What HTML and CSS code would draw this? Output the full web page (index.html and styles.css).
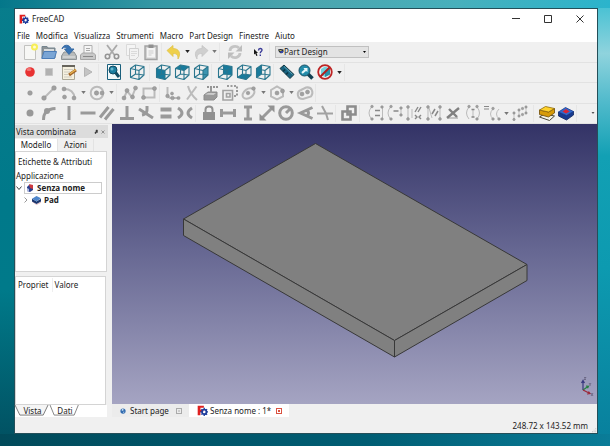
FILE: index.html
```html
<!DOCTYPE html>
<html lang="it">
<head>
<meta charset="utf-8">
<title>FreeCAD</title>
<link rel="stylesheet" href="styles.css">
</head>
<body>
<svg class="defs" aria-hidden="true">
  <symbol id="logo" viewBox="0 0 16 16"><path fill="#e02020" d="M1 1h9v3H5v3h4v3H5v5H1z"/><circle cx="10.500" cy="10" r="3.200" fill="none" stroke="#1d3d9c" stroke-width="2.600"/><path stroke="#1d3d9c" stroke-width="2" d="M10.500 4v2.500M10.500 13.500V16M4.800 10h2M14 10h2M6.500 6l1.600 1.600M13 12.500l1.600 1.600M14.600 6L13 7.600M6.500 14l1.600-1.600"/></symbol>
  <symbol id="drop" viewBox="0 0 6 4"><path d="M0 0h6L3 4z"/></symbol>
  <symbol id="cube" viewBox="0 0 16 16"><path fill="none" stroke="#2a768e" stroke-width="1.100" stroke-linejoin="round" d="M1.500 4.500l5-3.500 8.500 1.500v8.500L10 15.500l-8.500-2zM1.500 4.500L10 6.500v9M10 6.500l5-4M6.500 1v9l8.500 1M6.500 10l-5 3.500"/></symbol>
</svg>

<main class="window">
  <header class="titlebar">
    <svg class="app-icon"><use href="#logo"/></svg>
    <h1 class="title">FreeCAD</h1>
    <div class="window-buttons">
      <button aria-label="Riduci"><svg viewBox="0 0 8 8"><path d="M0 3.500h8"/></svg></button>
      <button aria-label="Ingrandisci"><svg viewBox="0 0 8 8"><path d="M.5.500h7v7h-7z"/></svg></button>
      <button aria-label="Chiudi"><svg viewBox="0 0 8 8"><path d="M.5.500l7 7M7.500.500l-7 7"/></svg></button>
    </div>
  </header>

  <nav class="menubar">
    <button>File</button><button>Modifica</button><button>Visualizza</button><button>Strumenti</button><button>Macro</button><button>Part Design</button><button>Finestre</button><button>Aiuto</button>
  </nav>

  <div class="toolbars">
    <div class="toolbar">
      <div class="group four">
        <button class="tool" aria-label="Nuovo"><svg viewBox="0 0 16 16"><path fill="#f7f7f5" stroke="#c2c2c0" d="M2.500 1.500h11v14h-11z"/><circle cx="12.500" cy="3" r="3.500" fill="#f7ee58"/><circle cx="12.500" cy="3" r="1.500" fill="#fffbd0"/></svg></button>
        <button class="tool" aria-label="Apri"><svg viewBox="0 0 16 16"><path fill="#8d9396" stroke="#75858f" d="M1 14V2.500h5l1 1.500h7v10z"/><path fill="#d9dcdd" d="M3 5h10v4H3z"/><path fill="#7aa5d5" stroke="#4c7db8" d="M.8 14.500L3 7.500h12.500l-2 7z"/></svg></button>
        <button class="tool" aria-label="Salva"><svg viewBox="0 0 16 16"><path fill="#b8bbbb" stroke="#8e9496" d="M3 8h10l2.500 4v3.500H.5V12z"/><path fill="#e6e6e6" d="M2 12.500h12v1H2z"/><path fill="#3974b4" stroke="#386ba4" d="M1 5c1-5 8-5 9 0h3l-5 5.500L3.500 5H6C5 3 3 2.500 1 5z"/></svg></button>
        <button class="tool" aria-label="Stampa"><svg viewBox="0 0 16 16"><path fill="#f5f5f5" stroke="#b0b0b0" d="M4 9V1.500h8V9"/><path stroke="#aaa" d="M6 4.500h4M6 6.500h4"/><path fill="#c8c8c8" stroke="#a5a5a5" d="M2.500 9h11l2 2v4.500H.5V11z"/><path fill="#888" d="M3 12h10v1H3z"/></svg></button>
      </div>
      <div class="group three">
        <button class="tool" aria-label="Taglia"><svg viewBox="0 0 16 16"><path fill="none" stroke="#aaa" stroke-width="1.800" d="M3 1l7.500 10M13 1L5.500 11"/><g fill="none" stroke="#949494" stroke-width="1.600"><circle cx="3.500" cy="12.500" r="2.200"/><circle cx="12.500" cy="12.500" r="2.200"/></g></svg></button>
        <button class="tool" aria-label="Copia"><svg viewBox="0 0 16 16"><path fill="#f5f5f5" stroke="#dadada" d="M2.500.500h9v11h-9z"/><path fill="#f2f2f2" stroke="#d0d0d0" d="M5.500 4.500h9v8l-3 3h-6z"/><path stroke="#dadada" d="M7 7.500h6M7 9.500h6M7 11.500h4"/></svg></button>
        <button class="tool" aria-label="Incolla"><svg viewBox="0 0 16 16"><path fill="#d2d2d2" stroke="#a2a2a2" stroke-width="1.400" d="M2 2h12v13.500H2z"/><path fill="#f4f4f4" d="M4 4h8v9.500H4z"/><path fill="#909090" d="M5.500.500h5V4h-5z"/><path stroke="#ccc" d="M5.500 7h5M5.500 9h5M5.500 11h3"/></svg></button>
      </div>
      <div class="group undo">
        <button class="tool" aria-label="Annulla"><svg viewBox="0 0 16 16"><path fill="#efd04b" stroke="#dfc34c" stroke-width=".8" d="M1 6.500L7 1.500v3c6 0 8.500 5 5 10.500 0-4-1-5.500-5-5.500v3z"/></svg></button><button class="drop dark" aria-label="Elenco annulla"><svg><use href="#drop"/></svg></button>
        <button class="tool" aria-label="Ripeti"><svg viewBox="0 0 16 16"><path fill="#cfcfcf" stroke="#c4c4c4" stroke-width=".8" d="M15 6.500L9 1.500v3c-6 0-8.500 5-5 10.500 0-4 1-5.500 5-5.500v3z"/></svg></button><button class="drop" aria-label="Elenco ripeti"><svg><use href="#drop"/></svg></button>
      </div>
      <div class="group help">
        <button class="tool" aria-label="Aggiorna"><svg viewBox="0 0 16 16"><path fill="none" stroke="#c4c4c4" stroke-width="2.800" d="M3 7c0-4.500 6-6 9-3M13 9c0 4.500-6 6-9 3"/><path fill="#bdbdbd" d="M15 1v6.500H8.500zM1 15V8.500h6.500z"/></svg></button>
        <button class="tool" aria-label="Che cos'è"><svg viewBox="0 0 16 16"><path fill="#161616" d="M4 5l4 4H6.500l1 2.500-1.200.500-1-2.500L4 10.500z"/><path fill="none" stroke="#3b3c98" stroke-width="1.400" d="M8.500 6.500c0-2.500 3.500-2.500 3.500-.5 0 1.500-1.700 1.500-1.700 3.200M10.300 10.500V12"/></svg></button>
      </div>
      <div class="workbench">
        <svg viewBox="0 0 12 10"><path fill="#252a36" d="M0 1l5-1 6 1v5L6 9 2 6z"/><path fill="#3446a5" d="M4 3l6 1v4H5z"/><path fill="#c3bd50" d="M3 2h4v2H3z"/></svg>
        <select aria-label="Ambiente di lavoro"><option>Part Design</option></select>
        <svg class="select-arrow"><use href="#drop"/></svg>
      </div>
    </div>

    <div class="toolbar">
      <div class="group four">
        <button class="tool" aria-label="Registra macro"><svg viewBox="0 0 16 16"><circle cx="8" cy="8" r="4.800" fill="#e83232"/><ellipse cx="7" cy="5.500" rx="2.500" ry="1.500" fill="#f17878"/></svg></button>
        <button class="tool" aria-label="Ferma macro"><svg viewBox="0 0 16 16"><path fill="#b1b1b1" stroke="#c7c7c7" d="M4.500 4.500h7v7h-7z"/></svg></button>
        <button class="tool" aria-label="Macro"><svg viewBox="0 0 16 16"><path fill="#f5f0df" stroke="#aaa696" d="M1.500 2.500h12v13h-12z"/><path fill="#67645c" d="M1 1h13v2H1z"/><path stroke="#d0ccc0" d="M3 5.500h9M3 8h6M3 10.500h4M3 13h8"/><path stroke="#a0642a" stroke-width="3" d="M15 6l-7 5"/><path stroke="#e9b54f" stroke-width="1.400" d="M15 5.500l-6 4.300"/></svg></button>
        <button class="tool" aria-label="Esegui macro"><svg viewBox="0 0 16 16"><path fill="#c4c4c4" stroke="#b4b4b4" d="M4.500 3.500l7.500 4.500-7.500 4.500z"/></svg></button>
      </div>
      <div class="group two">
        <button class="tool" aria-label="Adatta alla vista"><svg viewBox="0 0 16 16"><path fill="#f0f8fa" stroke="#195f7c" d="M1.500.500h13v15h-13z"/><circle cx="7" cy="6" r="4" fill="#1a7da0" stroke="#104a62"/><path stroke="#104a62" stroke-width="3" d="M9.500 8.500l3.500 4.500"/><circle cx="6" cy="5" r="1.500" fill="#69b9d0"/></svg></button>
        <button class="tool" aria-label="Assonometria"><svg viewBox="0 0 16 16"><use href="#cube"/></svg></button>
      </div>
      <div class="group views">
        <button class="tool" aria-label="Frontale"><svg viewBox="0 0 16 16"><path fill="#177b9d" d="M1.500 4.500L10 6.500v9l-8.500-2z"/><use href="#cube"/></svg></button>
        <button class="tool" aria-label="Alto"><svg viewBox="0 0 16 16"><path fill="#177b9d" d="M1.500 4.500l5-3.500L15 2.500l-5 4z"/><use href="#cube"/></svg></button>
        <button class="tool" aria-label="Destra"><svg viewBox="0 0 16 16"><path fill="#3c94b0" d="M10 6.500l5-4v8.500l-5 4.500z"/><use href="#cube"/></svg></button>
      </div>
      <div class="group views">
        <button class="tool" aria-label="Posteriore"><svg viewBox="0 0 16 16"><path fill="#177b9d" d="M6.500 1L15 2.500v8.500l-8.500-1z"/><use href="#cube"/></svg></button>
        <button class="tool" aria-label="Basso"><svg viewBox="0 0 16 16"><path fill="#177b9d" d="M1.500 13.500l5-3.500 8.500 1-5 4.500z"/><use href="#cube"/></svg></button>
        <button class="tool" aria-label="Sinistra"><svg viewBox="0 0 16 16"><path fill="#177b9d" d="M1.500 4.500l5-3.500v9l-5 3.500z"/><use href="#cube"/></svg></button>
      </div>
      <div class="group measure">
        <button class="tool" aria-label="Misura"><svg viewBox="0 0 16 16"><path fill="#17627f" stroke="#143945" stroke-linejoin="round" d="M1 4.500L5 1l10 9.500-4 4z"/><path stroke="#0c3444" stroke-width="1.500" d="M4 7.500l2-2M7 10.500l2-2"/><path stroke="#5aa7bd" d="M5 2.500l8.500 8"/></svg></button>
        <button class="tool" aria-label="Zoom"><svg viewBox="0 0 16 16"><path stroke="#123f51" stroke-width="3.500" d="M10 10l4.500 4.500"/><circle cx="6.500" cy="6.500" r="5.500" fill="#238caa" stroke="#174f65"/><path fill="#e8f8fb" d="M4 9.500L3.500 8l3-2.500L5.500 4H9.500v4L8 7l-3 2.500z"/></svg></button>
        <button class="tool" aria-label="Stile di visualizzazione"><svg viewBox="0 0 16 16"><path fill="#73d1dd" d="M4 5l4-2.500 5 2v6L8 13l-4-2z"/><path fill="#2a91a7" d="M8 7l5-2.500v6L8 13z"/><circle cx="8" cy="8" r="6.800" fill="none" stroke="#bd2424" stroke-width="1.800"/><path stroke="#b31d1d" stroke-width="2" d="M12.500 3.500l-9 9"/></svg></button><button class="drop dark" aria-label="Elenco stili"><svg><use href="#drop"/></svg></button>
      </div>
    </div>

    <div class="toolbar">
      <div class="group curves">
        <button class="tool" aria-label="Punto"><svg viewBox="0 0 16 16"><circle cx="8" cy="8" r="2.300" class="dot"/></svg></button>
        <button class="tool" aria-label="Linea"><svg viewBox="0 0 16 16"><path class="pale" d="M3 13L13 3"/><circle cx="3" cy="13" r="2.300" class="dot"/><circle cx="13" cy="3" r="2.300" class="dot"/></svg></button>
        <button class="tool" aria-label="Arco"><svg viewBox="0 0 16 16"><path class="pale" d="M3 4c6 0 10 3 10.500 9"/><circle cx="3" cy="4" r="2" class="dot"/><circle cx="3.500" cy="12" r="2" class="dot"/><circle cx="13" cy="13" r="2" class="dot"/></svg></button><button class="drop" aria-label="Elenco archi"><svg><use href="#drop"/></svg></button>
        <button class="tool" aria-label="Cerchio"><svg viewBox="0 0 16 16"><circle class="pale" cx="8" cy="8" r="6.300"/><circle cx="7.500" cy="8" r="2.200" class="dot"/><circle cx="13" cy="8" r="2" class="dot"/></svg></button><button class="drop" aria-label="Elenco cerchi"><svg><use href="#drop"/></svg></button>
      </div>
      <div class="group pair">
        <button class="tool" aria-label="Polilinea"><svg viewBox="0 0 16 16"><path class="pale" d="M2 13l3-7 5 6 3.500-9"/><circle cx="2" cy="13" r="2" class="dot"/><circle cx="5" cy="5.500" r="2" class="dot"/><circle cx="10.500" cy="12" r="2" class="dot"/><circle cx="13.500" cy="3" r="2" class="dot"/></svg></button>
        <button class="tool" aria-label="Rettangolo"><svg viewBox="0 0 16 16"><path class="pale" d="M2.500 3.500h11v9h-11z"/><circle cx="2.500" cy="12.500" r="2" class="dot"/><circle cx="13.500" cy="3.500" r="2" class="dot"/></svg></button>
      </div>
      <div class="group shapes">
        <button class="tool" aria-label="Raccordo"><svg viewBox="0 0 16 16"><path class="pale" d="M2.500 2v7q0 4 4 4H14"/><circle cx="2.500" cy="11" r="1.800" class="dot"/><circle cx="7" cy="8.500" r="1.500" class="dot"/><circle cx="7.500" cy="13" r="1.800" class="dot"/><circle cx="13.500" cy="13" r="1.600" class="dot"/></svg></button>
        <button class="tool" aria-label="Taglia bordo"><svg viewBox="0 0 16 16"><path class="pale" d="M4 1q2 8 9 14M12.500 1.500L3 14.500"/></svg></button>
        <button class="tool" aria-label="Geometria esterna"><svg viewBox="0 0 16 16"><path fill="#999" stroke="#8c8c8c" d="M1 10l4-3h9v5l-3 3H1z"/><path fill="#ccc" d="M2 9.500L5 8h8l-2.500 2z"/><path stroke="#999" stroke-width="2" d="M8 8V3"/><path stroke="#777" stroke-width="1.500" stroke-dasharray="2 1" d="M4 2h11"/></svg></button>
        <button class="tool" aria-label="Geometria di costruzione"><svg viewBox="0 0 16 16"><path fill="none" stroke="#a2a2a2" stroke-width="1.600" d="M1 5.500h9.500V15H1zM4.500 8.500H8V12H4.500z"/><path fill="none" stroke="#808080" stroke-width="1.600" stroke-dasharray="2 1.500" d="M5 1h10v10h-4"/></svg></button>
        <button class="tool" aria-label="Ellisse"><svg viewBox="0 0 16 16"><ellipse class="pale" cx="7.500" cy="8.500" rx="6.500" ry="4.500" transform="rotate(-35 7.500 8.500)"/><circle cx="7" cy="8" r="1.800" class="dot"/><circle cx="12.500" cy="3.500" r="1.800" class="dot"/></svg></button><button class="drop" aria-label="Elenco ellissi"><svg><use href="#drop"/></svg></button>
        <button class="tool" aria-label="Poligono"><svg viewBox="0 0 16 16"><path class="pale" d="M2 5l6-3.500L14 5v6.500L8 14.500l-6-3z"/><circle cx="8" cy="8" r="2" class="dot"/><circle cx="13.500" cy="6" r="2" class="dot"/></svg></button><button class="drop" aria-label="Elenco poligoni"><svg><use href="#drop"/></svg></button>
        <button class="tool" aria-label="Asola"><svg viewBox="0 0 16 16"><path class="pale" d="M4 5l5-2.500c6-1 8 5 5 9l-8 2.500C0 14-1 7 4 5z"/><circle cx="5" cy="9" r="2" class="dot"/><circle cx="10.500" cy="7" r="2" class="dot"/></svg></button>
      </div>
    </div>

    <div class="toolbar">
      <div class="group nine">
        <button class="tool" aria-label="Coincidenza"><svg viewBox="0 0 16 16"><circle cx="8" cy="8" r="3.500" fill="#989898"/></svg></button>
        <button class="tool" aria-label="Punto su oggetto"><svg viewBox="0 0 16 16"><path class="bold" d="M2.500 15c0-7 3-11 12-11.500"/><circle cx="6" cy="6" r="3" fill="#999"/></svg></button>
        <button class="tool" aria-label="Verticale"><svg viewBox="0 0 16 16"><path class="bold" d="M8 1v14"/></svg></button>
        <button class="tool" aria-label="Orizzontale"><svg viewBox="0 0 16 16"><path class="bold" d="M.5 8h15"/></svg></button>
        <button class="tool" aria-label="Parallelo"><svg viewBox="0 0 16 16"><path class="bold" d="M1 12.500L9.500 2M6 14.500L14.500 4"/></svg></button>
        <button class="tool" aria-label="Perpendicolare"><svg viewBox="0 0 16 16"><path class="bold" d="M8 1v12M1 13.500h14"/></svg></button>
        <button class="tool" aria-label="Tangente"><svg viewBox="0 0 16 16"><path class="bold" d="M1 4l14 9M4 10c6-1 5-5 5-9"/></svg></button>
        <button class="tool" aria-label="Uguale"><svg viewBox="0 0 16 16"><path class="bold thick" d="M2.500 4.500h11M2.500 11.500h11"/></svg></button>
        <button class="tool" aria-label="Simmetria"><svg viewBox="0 0 16 16"><path class="bold" d="M1 3q8 5 0 10M15 3q-8 5 0 10"/></svg></button>
      </div>
      <div class="group seven">
        <button class="tool" aria-label="Blocca"><svg viewBox="0 0 16 16"><path fill="#909090" d="M2 7h12v8H2z"/><path fill="none" stroke="#909090" stroke-width="2" d="M4.500 7V4.500c0-4 7-4 7 0V7"/></svg></button>
        <button class="tool" aria-label="Distanza orizzontale"><svg viewBox="0 0 16 16"><path class="bold" d="M1.500 4v8M14.500 4v8M1.500 8h13"/></svg></button>
        <button class="tool" aria-label="Distanza verticale"><svg viewBox="0 0 16 16"><path class="bold" d="M4 2h8M4 14h8M8 2v12"/></svg></button>
        <button class="tool" aria-label="Lunghezza"><svg viewBox="0 0 16 16"><path class="bold" d="M3.500 12.500l9-9"/><path fill="#929292" d="M15.500.500v7l-7-7zM.5 15.500v-7l7 7z"/></svg></button>
        <button class="tool" aria-label="Raggio"><svg viewBox="0 0 16 16"><circle cx="8" cy="8" r="6.300" class="bold"/><path class="bold" d="M8 8l4-4"/></svg></button>
        <button class="tool" aria-label="Angolo"><svg viewBox="0 0 16 16"><path class="bold" d="M14.500 2.500L2.500 8l12 5.500M9 5q3 3 0 6"/></svg></button>
        <button class="tool" aria-label="Rifrazione"><svg viewBox="0 0 16 16"><path fill="none" stroke="#a2a2a2" stroke-width="2" d="M0 8.500h16M5 1l4 7.500L11 15"/></svg></button>
      </div>
      <div class="group one">
        <button class="tool" aria-label="Allineamento interno"><svg viewBox="0 0 16 16"><path fill="none" stroke="#8c8c8c" stroke-width="2.600" d="M6.500 1.500h8v8h-8zM1.500 6.500h8v8h-8z"/></svg></button>
      </div>
      <div class="group select-tools">
        <button class="tool" aria-label="Chiudi forma"><svg viewBox="0 0 16 16"><path class="thin" d="M3.500 2q-5 6 0 12M14.500 2v12"/><path stroke="#888" stroke-width="1.500" d="M7 5.500h5M7 10.500h5"/><circle cx="4" cy="1.500" r="1.300" class="dot"/><circle cx="4" cy="14" r="1.300" class="dot"/><circle cx="14" cy="2" r="1.300" class="dot"/><circle cx="14" cy="14" r="1.300" class="dot"/></svg></button>
        <button class="tool" aria-label="Collega bordi"><svg viewBox="0 0 16 16"><path class="thin" d="M3.500 2q-5 6 0 12M14 3v7"/><path fill="none" stroke="#888" stroke-width="1.500" d="M6.500 6h5"/><circle cx="4" cy="1.500" r="1.300" class="dot"/><circle cx="4" cy="14" r="1.300" class="dot"/><circle cx="14" cy="3" r="1.300" class="dot"/><circle cx="14" cy="10" r="1.300" class="dot"/></svg></button>
        <button class="tool" aria-label="Seleziona vincoli"><svg viewBox="0 0 16 16"><path class="thin" d="M2 2v12M6 4v9"/><path fill="none" stroke="#888" stroke-width="1.400" d="M9 7l3-5M12 7l3-5M9 10l2 2-2 2M15 10l-2 2 2 2"/><circle cx="2" cy="2" r="1.400" class="dot"/><circle cx="2" cy="14" r="1.400" class="dot"/></svg></button>
        <button class="tool" aria-label="Seleziona elementi"><svg viewBox="0 0 16 16"><path class="thin" d="M2 2v12M14 2v12M3 3l3 10"/><path fill="none" stroke="#888" stroke-width="1.500" d="M6 9l3-5M9 11l3-5"/><circle cx="2" cy="2" r="1.400" class="dot"/><circle cx="2" cy="14" r="1.400" class="dot"/><circle cx="14" cy="2" r="1.400" class="dot"/><circle cx="14" cy="14" r="1.400" class="dot"/></svg></button>
        <button class="tool" aria-label="Vincoli ridondanti"><svg viewBox="0 0 16 16"><path stroke="#c4c4c4" stroke-width="2" d="M3 13h10"/><path stroke="#808080" stroke-width="2.400" d="M2 13L14 3M4 4l8 8"/></svg></button>
        <button class="tool" aria-label="Vincoli in conflitto"><svg viewBox="0 0 16 16"><path class="thin" d="M4 2q-5 6 0 12M12 2q5 6 0 12M8 5v7"/><path stroke="#888" stroke-width="1.400" d="M6.500 4.500h3M6.500 12h3"/><circle cx="4" cy="1.500" r="1.300" class="dot"/><circle cx="12" cy="1.500" r="1.300" class="dot"/><circle cx="12" cy="14" r="1.300" class="dot"/></svg></button>
        <button class="tool" aria-label="Clona"><svg viewBox="0 0 16 16"><path stroke="#888" d="M0 1.500h5M0 4h5"/><path class="thin" d="M9 4q-5 5 0 10M15 4q-5 5 0 10"/><circle cx="9" cy="3.500" r="1.300" class="dot"/><circle cx="9" cy="14" r="1.300" class="dot"/><circle cx="15" cy="14" r="1.300" class="dot"/></svg></button><button class="drop" aria-label="Elenco clona"><svg><use href="#drop"/></svg></button>
        <button class="tool" aria-label="Matrice"><svg viewBox="0 0 16 16"><path stroke="#c4c4c4" d="M2 8v6M7 5v6M14 2v6"/><g class="dot"><circle cx="2" cy="8" r="1.200"/><circle cx="2" cy="14.500" r="1.200"/><circle cx="7" cy="5" r="1.200"/><circle cx="7" cy="11" r="1.200"/><circle cx="10.500" cy="3.500" r="1.200"/><circle cx="10.500" cy="9.500" r="1.200"/><circle cx="14" cy="2" r="1.200"/><circle cx="14" cy="8" r="1.200"/></g></svg></button>
      </div>
      <div class="group pair">
        <button class="tool" aria-label="Estrusione"><svg viewBox="0 0 16 16"><path fill="#f3f3ea" stroke="#4a4635" d="M.5 12l5-3 10 2-5 4.500z"/><path fill="#d79b08" stroke="#6b4a08" stroke-width=".8" d="M.5 5v4.500l9 2.500 6-4V3.500L9.500 7z"/><path fill="#ffd22b" stroke="#8d680d" stroke-width=".8" d="M.5 5l6-3.500 9 2L9.500 7z"/></svg></button>
        <button class="tool" aria-label="Tasca"><svg viewBox="0 0 16 16"><path fill="#173a91" stroke="#12265b" stroke-width=".8" d="M.5 7v4l8 4 7-5V6.500l-7 4z"/><path fill="#326acc" stroke="#173a91" stroke-width=".8" d="M.5 7l7-4.500 8 4-7 4z"/><path fill="#d82535" d="M4.500 6.500L8 4l3.500 2.500-3.500 2z"/></svg></button>
      </div>
      <button class="more" aria-label="Altri comandi"><svg><use href="#drop"/></svg></button>
    </div>
  </div>

  <div class="workspace">
    <aside class="dock">
      <header class="dock-title"><h2>Vista combinata</h2><button aria-label="Sgancia"><svg viewBox="0 0 6 6"><path d="M3 1h1.500v2.500H3zM2 3h1v1.500H2z"/></svg></button><button aria-label="Chiudi pannello"><svg viewBox="0 0 6 6"><path d="M1.500 1.500l3 3M4.500 1.500l-3 3"/></svg></button></header>
      <div class="dock-tabs" role="tablist"><button role="tab" aria-selected="true">Modello</button><button role="tab" aria-selected="false">Azioni</button></div>
      <section class="tree">
        <h3>Etichette &amp; Attributi</h3>
        <p>Applicazione</p>
        <ul>
          <li class="document"><svg class="chevron" viewBox="0 0 6 6"><path d="M.5 1.500L3 4.500l2.500-3"/></svg><span class="document-name"><svg viewBox="0 0 8 8"><path fill="#293f8d" d="M1 3l2-2 4 1v4L4 8 1 7z"/><path fill="#ce3a3e" d="M3 0l4 1v4L4 4z"/><path fill="#aab5dd" d="M1 4l2 1v3L1 7z"/></svg>Senza nome</span></li>
          <li class="feature"><svg class="chevron light" viewBox="0 0 6 6"><path d="M1.500.500L4 3 1.500 5.500"/></svg><svg class="pad-icon" viewBox="0 0 12 10"><path fill="#fff" stroke="#d99aa0" stroke-width=".7" d="M1 6l5 3.500L11 7"/><path fill="#1b376e" d="M1 3l5 3 5-3v3L6 9 1 6z"/><path fill="#4f86cb" d="M1 3l5-3 5 2.500L6 6z"/></svg>Pad</li>
        </ul>
      </section>
      <section class="properties">
        <table><thead><tr><th>Propriet</th><th>Valore</th></tr></thead></table>
      </section>
      <div class="sheet-tabs" role="tablist">
        <button role="tab" aria-selected="false"><svg viewBox="0 0 36 12" preserveAspectRatio="none"><path d="M0 0l5 11h24l5-11"/></svg><span>Vista</span></button>
        <button role="tab" aria-selected="true"><svg viewBox="0 0 36 12" preserveAspectRatio="none"><path d="M0 0l5 11h24l5-11"/></svg><span>Dati</span></button>
      </div>
    </aside>

    <section class="document-area">
      <div class="view">
        <svg viewBox="0 0 485 280" role="img" aria-label="Solido Pad">
          <g fill="#808080" stroke="#383838" stroke-width="1" stroke-linejoin="round">
            <path d="M203.500 19.500L415 140.500 282.500 216.500 71.500 95z"/>
            <path d="M71.500 95l211 121.500V233L71.500 111.500z"/>
            <path d="M282.500 216.500L415 140.500v16L282.500 233z"/>
          </g>
          <g fill="none" stroke-width="1.200">
            <path stroke="#38397f" d="M471 266v-9M469.500 259l1.500-2.500 1.500 2.500"/>
            <path stroke="#268143" d="M471 266l5-3.500M474 262l2.500.3-1 2"/>
            <path stroke="#9b2636" d="M471 266l7 3.500M475 270l3-.5-1.500-2"/>
            <path stroke="#5b5774" stroke-width=".7" d="M472 253.500h2l-2 2h2M477 259l1 1.500 1-1.500M478 260.500v1.500M479 269l2 3M481 269l-2 3"/>
          </g>
        </svg>
      </div>
      <div class="document-tabs" role="tablist">
        <div class="document-tab start"><svg class="globe" viewBox="0 0 8 8"><circle cx="4" cy="4" r="3.500" fill="#306bb0"/><path fill="#cfe2f2" d="M3 1l2 1-1 2-2-1zM4 5l2 0-1 2z"/></svg><button role="tab" aria-selected="false">Start page</button><button class="close" aria-label="Chiudi Start page"><i></i></button></div>
        <div class="document-tab active"><svg class="file-icon"><use href="#logo"/></svg><button role="tab" aria-selected="true">Senza nome : 1*</button><button class="close red" aria-label="Chiudi Senza nome"><i></i></button></div>
      </div>
    </section>
  </div>

  <footer class="statusbar"><output>248.72 x 143.52 mm</output><svg viewBox="0 0 6 6"><path d="M4 0h1v1H4zM4 2h1v1H4zM2 2h1v1H2zM4 4h1v1H4zM2 4h1v1H2zM0 4h1v1H0z"/></svg></footer>
</main>
</body>
</html>
```
FILE: styles.css
```css
* { box-sizing: border-box; }

body {
  margin: 0;
  height: 100vh;
  padding: 8px 12px 12px 14px;
  font: 8px/12px "Noto Sans", "Open Sans", sans-serif;
  color: #222;
  background:
    linear-gradient(90deg, #04778a, #3497a4 25%, #4ba5ae 50%, #47b0bc 75%, #2bb4cc) top / 100% 8px no-repeat,
    linear-gradient(90deg, #014a5a, #005468 30%, #005d73 60%, #0a7c98) bottom / 100% 12px no-repeat,
    linear-gradient(#3fbfd2, #8fd3dd 12%, #55bccd 22%, #12a0b4 35%, #0d9ab0 60%, #087f9c) right / 12px 100% no-repeat,
    linear-gradient(#087d8c, #00798a 45%, #007a8a 65%, #014f60) left / 14px 100% no-repeat;
}

h1, h2, h3, p, ul { margin: 0; padding: 0; font: inherit; }
ul { list-style: none; }
button, select { margin: 0; padding: 0; border: 0; background: none; font: inherit; color: inherit; white-space: nowrap; }
svg { display: block; flex: none; overflow: visible; }
.defs { position: absolute; width: 0; height: 0; }

.window {
  height: 100%;
  display: flex;
  flex-direction: column;
  background: #f0f0f0;
  border: 1px solid #244f59;
}

/* Title and menus */
.titlebar {
  flex: none;
  height: 19px;
  display: flex;
  align-items: center;
  padding: 0 1px 0 4px;
  background: #fff;
}
.app-icon { width: 10px; height: 10px; margin-right: 3px; }
.window-buttons { display: flex; margin-left: auto; }
.window-buttons button { width: 32px; height: 18px; display: grid; place-items: center; }
.window-buttons svg { width: 8px; height: 8px; fill: none; stroke: #333; stroke-width: 1; }

.menubar {
  flex: none;
  height: 14px;
  display: flex;
  gap: 6px;
  padding: 1px 0 0 2px;
  background: #fff;
}

/* Toolbars */
.toolbars { flex: none; height: 82px; display: grid; grid-template-rows: repeat(4, 1fr); }
.toolbar {
  display: flex;
  align-items: stretch;
  gap: 4px;
  padding-left: 5px;
  border-bottom: 1px solid #e2e2e2;
}
.group { display: flex; align-items: center; box-shadow: 2px 0 0 -1px #e6e6e6; }
.tool { flex: 1; min-width: 0; display: grid; place-items: center; }
.tool svg { width: 16px; height: 16px; }
.drop { width: 9px; display: grid; place-items: center; fill: #777; }
.drop svg { width: 5px; height: 3px; }
.dark { fill: #222; }
.four { width: 78px; }
.three { width: 59px; }
.undo { width: 54px; }
.help { width: 46px; }
.two { width: 47px; }
.views { width: 58px; }
.measure { width: 67px; }
.curves { width: 96px; }
.pair { width: 39px; }
.shapes { width: 152px; }
.nine { width: 175px; }
.seven { width: 136px; }
.one { width: 20px; }
.select-tools { width: 170px; padding-left: 3px; padding-right: 3px; }
.dot { fill: #a0a0a0; stroke: #8c8c8c; stroke-width: 0.5; }
.pale { fill: none; stroke: #bbb; stroke-width: 2; }
.thin { fill: none; stroke: #bbb; stroke-width: 1; }
.bold { fill: none; stroke: #9a9a9a; stroke-width: 3; }
.thick { stroke-width: 4; }
.more { margin-left: auto; width: 9px; display: grid; place-items: center; fill: #555; }
.more svg { width: 4px; height: 2px; }

.workbench {
  align-self: center;
  width: 94px;
  height: 12px;
  display: flex;
  align-items: center;
  padding: 0 2px;
  margin-left: 2px;
  background: #e3e3e3;
  border: 1px solid #c0c0c0;
}
.workbench svg { width: 6px; height: 5px; }
.workbench select { flex: 1; height: 10px; line-height: 10px; appearance: none; }
.workbench .select-arrow { width: 3px; height: 2px; }

/* Main area */
.workspace { flex: 1; min-height: 0; display: flex; gap: 4px; }
.dock { width: 93px; flex: none; display: flex; flex-direction: column; }
.dock-title {
  height: 13px;
  margin-top: 1px;
  display: flex;
  align-items: center;
  padding: 0 1px;
  background: #dcdcdc;
}
.dock-title h2 { flex: 1; white-space: nowrap; }
.dock-title button { width: 7px; }
.dock-title svg { width: 6px; height: 6px; fill: #333; stroke: #444; stroke-width: 0.5; }
.dock-tabs { display: flex; height: 13px; padding-top: 1px; }
.dock-tabs button { width: 36px; height: 12px; border-right: 1px solid #e3e3e3; }
.dock-tabs [aria-selected="true"] { width: 43px; background: #fff; }

.tree { height: 121px; margin-right: 1px; padding-top: 4px; background: #fff; border: 1px solid #d4d4d4; }
.tree h3 { padding-left: 2px; margin-bottom: 2px; }
.tree li { display: flex; align-items: center; height: 12px; font-family: "Open Sans", "Noto Sans", sans-serif; font-weight: bold; }
.chevron { width: 6px; height: 6px; margin-right: 2px; fill: none; stroke: #444; stroke-width: 1; }
.light { stroke: #999; }
.document-name {
  flex: 1;
  display: flex;
  align-items: center;
  gap: 3px;
  padding-left: 1px;
  margin-right: 4px;
  line-height: 10px;
  border: 1px solid #ccc;
}
.document-name svg { width: 8px; height: 8px; }
.feature { padding-left: 7px; }
.pad-icon { width: 11px; height: 9px; margin-right: 2px; }

.properties {
  flex: 1;
  min-height: 0;
  margin: 4px 2px 0 0;
  padding-top: 1px;
  background: #fff;
  border: 1px solid #d4d4d4;
}
.properties table { width: 100%; border-collapse: collapse; }
.properties th { padding: 1px 2px; text-align: left; font-weight: normal; }
.properties th:first-child { width: 36px; border-right: 1px solid #eee; }

.sheet-tabs { display: flex; height: 12px; margin-right: 1px; background: #fff; }
.sheet-tabs button { position: relative; width: 35px; height: 11px; line-height: 11px; }
.sheet-tabs button + button { width: 30px; }
.sheet-tabs svg { position: absolute; inset: 0; width: 100%; height: 100%; fill: #f5f5f5; stroke: #777; stroke-width: 1; }
.sheet-tabs [aria-selected="true"] svg { fill: #fff; }
.sheet-tabs span { position: relative; }

.document-area { flex: 1; min-width: 0; display: flex; flex-direction: column; }
.view {
  position: relative;
  flex: 1;
  min-height: 0;
  background: linear-gradient(#333366, #666792 45%, #a5a4c2);
}
.view svg { position: absolute; inset: 0; width: 100%; height: 100%; }
.document-tabs { display: flex; height: 13px; }
.document-tab { display: flex; align-items: center; gap: 4px; padding: 0 8px; background: #ececec; }
.start { width: 77px; }
.active { width: 100px; gap: 2px; background: #fff; }
.globe { width: 6px; height: 6px; }
.file-icon { width: 11px; height: 11px; }
.close { flex: none; margin-left: 3px; width: 6px; height: 6px; display: grid; place-items: center; border: 1px solid #aaa; }
.close i { width: 2px; height: 2px; background: #ccc; }
.red { border-color: #da5241; }
.red i { background: #da5241; }

.statusbar {
  flex: none;
  height: 16px;
  display: flex;
  align-items: center;
  justify-content: flex-end;
  gap: 4px;
  padding-top: 2px;
}
.statusbar svg { width: 5px; height: 5px; align-self: flex-end; fill: #bbb; }
```
